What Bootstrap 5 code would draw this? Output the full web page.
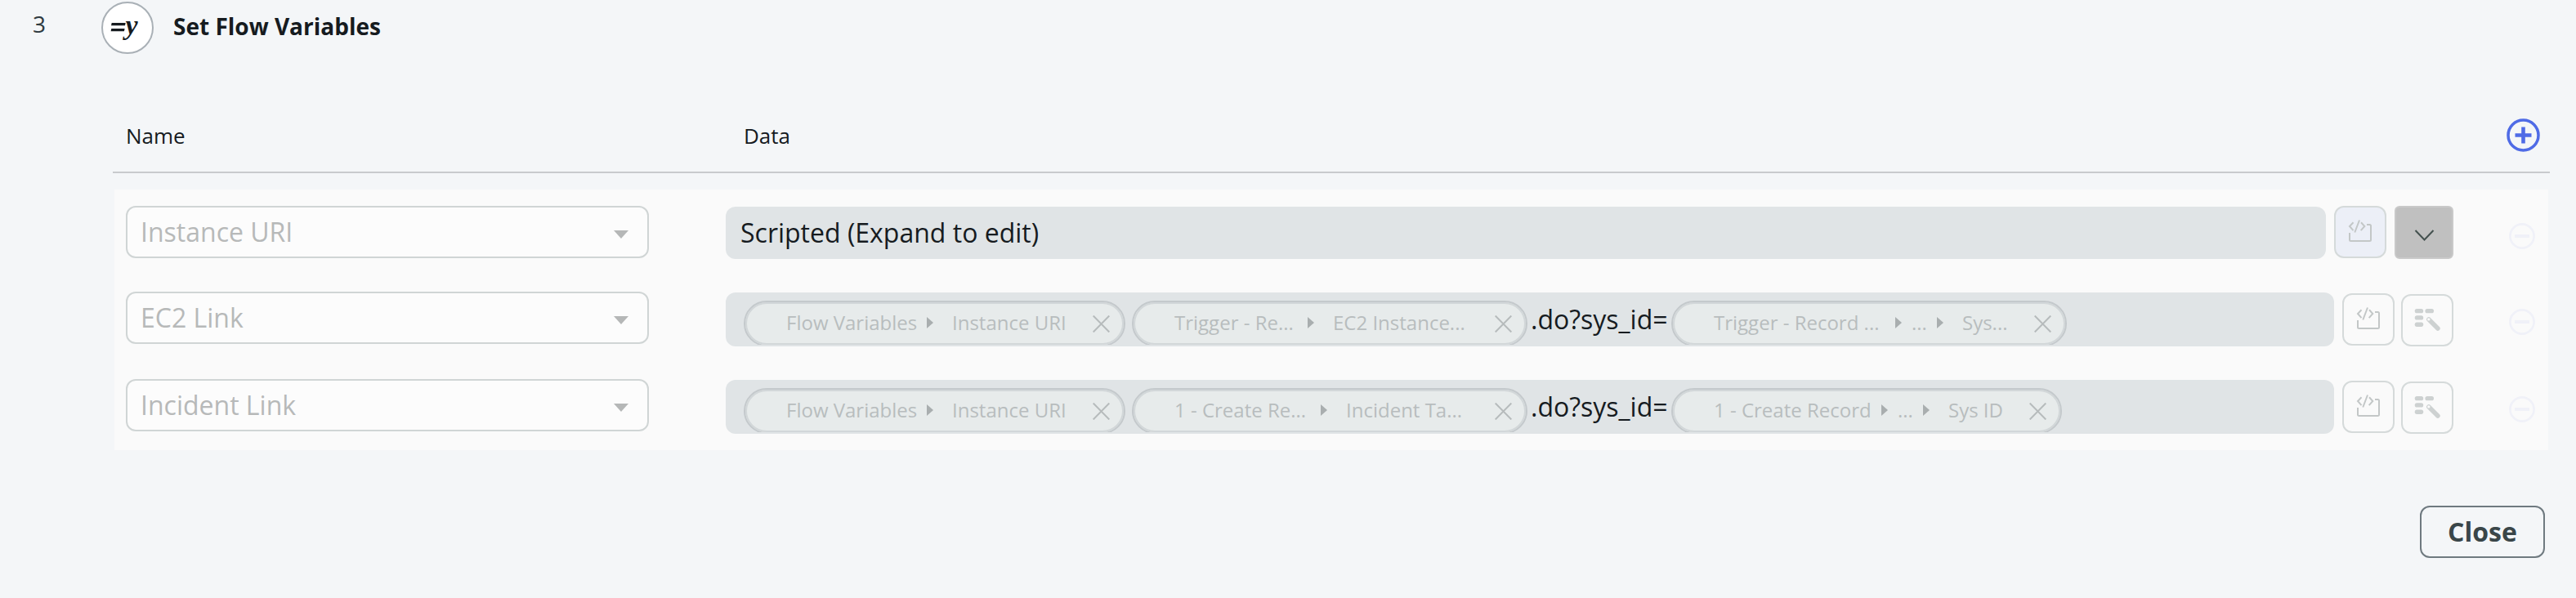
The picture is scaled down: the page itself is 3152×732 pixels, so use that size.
<!DOCTYPE html>
<html lang="en">
<head>
<meta charset="utf-8">
<title>Set Flow Variables</title>
<link href="https://cdn.jsdelivr.net/npm/bootstrap@5.3.0/dist/css/bootstrap.min.css" rel="stylesheet">
<style>
html{overflow:hidden}
body{background:#f4f6f8;font-family:"Open Sans",sans-serif;color:#161b1f;height:732px;overflow:hidden}
svg{display:block;flex:none}
.step-head{height:138px;padding:2px 0 0 40px}
.step-no{width:84px;height:54px;line-height:54px;font-size:28px;color:#2e3a40}
.step-icon{width:64px;height:64px;border:2px solid #a9b0b6;background:#fff}
.step-title{font-size:28px;font-weight:700;line-height:60px;margin-left:24px}
.flow-table{margin:0 32px 0 138px}
.cols-head{height:74px;border-bottom:2px solid #c8cacd;font-size:26px;line-height:56px;padding:0 12px 0 16px}
.cols-head .name-col{width:756px}
.cols-head svg{margin-top:7px}
.rows-panel{margin:20px 2px 0;height:319px;background:#fafafa;padding:20px 16px 0 14px}
.flow-row{height:107px}
.flow-row:first-child{height:105px}
.pick{width:640px;height:64px;border:2px solid #d0d5d5;border-radius:12px;background:#fcfcfc;color:#b7b9b9;font-size:32px;line-height:60px;padding:0 23px 0 16px;margin-right:94px}
.pick svg{margin-top:5px}
.field{height:66px;margin-top:1px;width:1968px;border-radius:12px;background:#e0e4e6;font-size:32px;line-height:66px;padding-left:22px}
.field.scripted{width:1958px;height:64px;line-height:64px;padding-left:18px}
.chips{height:64px;overflow:hidden;padding-top:10px}
.chip{height:56px;border:2px solid #c4c9cc;border-radius:28px;box-shadow:inset 0 0 0 2px #d2d7d9;background:#e7ebeb;color:#b8bdbe;font-size:24px;line-height:49px;padding:0 17px 0 50px;white-space:nowrap}
.chip svg.tri{margin:18px 0 0}
.chip svg.cut{margin:16px 0 0 auto}
.chip .leaf{margin-left:23px}
.chip .mid{margin-left:12px;width:31px}
.chip.c1{width:467px;margin-right:8px}
.chip.c2,.chip.c3{width:484px}
.chip.c3s{width:478px}
.w-flow{width:172px}.w-trig{width:163px}.w-create{width:179px}.w-trec{width:222px}.w-crec{width:205px}
.literal{width:176px;padding-left:4px;line-height:46px;white-space:pre}
.tool{width:64px;height:64px;border:2px solid #d5dada;border-radius:12px;margin:2px 0 0 10px;padding:0;background:transparent}
.tool svg{margin:-2px}
.tool.wand{margin:3px 0 0 8px}
.tool.scr{margin-top:0;background:#eceff7}
.expand{width:72px;height:65px;border:2px solid #c9c9c9;border-radius:6px;background:#c0c0c0;margin-left:10px;padding:0}
.expand svg{margin:27px 0 0 22px}
.remove{margin:21px 0 0 auto}
.close-row{padding:68px 38px 0 0}
.btn-done{width:153px;height:64px;border:2px solid #6f7a80;border-radius:12px;color:#3a4649;font-size:32px;font-weight:700;line-height:58px;padding:0}
</style>
</head>
<body>
<svg width="0" height="0" class="d-none">
<defs>
<symbol id="caret" viewBox="0 0 18 10"><path d="M0 0H18L9 10Z" fill="#b5b7b7"/></symbol>
<symbol id="tri" viewBox="0 0 8 14"><path d="M0 0L8 7L0 14Z" fill="#a9aeaf"/></symbol>
<symbol id="cut" viewBox="0 0 21 21"><path d="M.7 .5L20.3 20.5M20.3 .5L.7 20.5" stroke="#b6bbbc" stroke-width="2" fill="none"/></symbol>
<symbol id="code" viewBox="0 0 64 64"><g fill="none" stroke="#c3c7c7" stroke-width="2"><path d="M19 33V41.5Q19 43 20.5 43H43.500Q45 43 45 41.500V24.500Q45 23 43.500 23H40"/><path d="M23.500 20.300L19 25L23.500 30.200M33 20.300L37.300 25L32.700 30.200M31 17.500L25.300 32.500"/></g></symbol>
<symbol id="wand" viewBox="0 0 64 64"><g fill="#cdd1d1"><rect x="16.700" y="18" width="10.500" height="5.300" rx="2.600"/><rect x="29.400" y="18" width="10.600" height="5.300" rx="2.600"/><rect x="16.700" y="26.300" width="10.500" height="5.300" rx="2.600"/><rect x="16.700" y="34.600" width="10.500" height="5.300" rx="2.600"/></g><path d="M33.900 31L44.900 42" stroke="#cdd1d1" stroke-width="5.600" stroke-linecap="round"/><circle cx="33.800" cy="30.900" r="1.700" fill="#fafafa"/></symbol>
<symbol id="minus" viewBox="0 0 32 32"><circle cx="16" cy="16" r="14.600" fill="none" stroke="#f0f1f8" stroke-width="2.700"/><path d="M7 16H25" stroke="#f0f1f8" stroke-width="4"/></symbol>
</defs>
</svg>

<header class="step-head d-flex align-items-start">
<div class="step-no">3</div>
<div class="step-icon rounded-circle"><svg width="60" height="60" viewBox="126 4 60 60"><path d="M136.700 28H153.700L153 31.300H136ZM136.300 35H152.600L151.900 38.300H135.600Z" fill="#161b1f"/><text x="153.500" y="42" font-family="Liberation Serif, serif" font-weight="700" font-style="italic" font-size="34" fill="#161b1f">y</text></svg></div>
<div class="step-title">Set Flow Variables</div>
</header>

<main class="flow-table">
<div class="cols-head d-flex">
<div class="name-col">Name</div>
<div>Data</div>
<svg class="ms-auto" width="41" height="41" viewBox="0 0 41 41"><circle cx="20.500" cy="20.500" r="18.500" fill="none" stroke="#4f6be6" stroke-width="3.500"/><path d="M10.500 20.500H30.500M20.500 10.500V30.500" stroke="#4f6be6" stroke-width="4.600"/></svg>
</div>

<section class="rows-panel">
<div class="flow-row d-flex align-items-start">
<div class="pick d-flex align-items-center justify-content-between"><span>Instance URI</span><svg width="18" height="10"><use href="#caret"/></svg></div>
<div class="field scripted">Scripted (Expand to edit)</div>
<button class="tool scr"><svg width="64" height="64"><use href="#code"/></svg></button>
<button class="expand d-flex"><svg width="25" height="16" viewBox="0 0 25 16"><path d="M1.500 1L12.500 12.500L23.500 1" fill="none" stroke="#44514f" stroke-width="2"/></svg></button>
<svg class="remove" width="32" height="32"><use href="#minus"/></svg>
</div>

<div class="flow-row d-flex align-items-start">
<div class="pick d-flex align-items-center justify-content-between"><span>EC2 Link</span><svg width="18" height="10"><use href="#caret"/></svg></div>
<div class="field"><div class="chips d-flex">
<div class="chip c1 d-flex"><span class="w-flow">Flow Variables</span><svg class="tri" width="8" height="14"><use href="#tri"/></svg><span class="leaf">Instance URI</span><svg class="cut" width="21" height="21"><use href="#cut"/></svg></div>
<div class="chip c2 d-flex"><span class="w-trig">Trigger - Re...</span><svg class="tri" width="8" height="14"><use href="#tri"/></svg><span class="leaf">EC2 Instance...</span><svg class="cut" width="21" height="21"><use href="#cut"/></svg></div>
<span class="literal">.do?sys_id=</span>
<div class="chip c3 d-flex"><span class="w-trec">Trigger - Record ...</span><svg class="tri" width="8" height="14"><use href="#tri"/></svg><span class="mid">...</span><svg class="tri" width="8" height="14"><use href="#tri"/></svg><span class="leaf">Sys...</span><svg class="cut" width="21" height="21"><use href="#cut"/></svg></div>
</div></div>
<button class="tool"><svg width="64" height="64"><use href="#code"/></svg></button>
<button class="tool wand"><svg width="64" height="64"><use href="#wand"/></svg></button>
<svg class="remove" width="32" height="32"><use href="#minus"/></svg>
</div>

<div class="flow-row d-flex align-items-start">
<div class="pick d-flex align-items-center justify-content-between"><span>Incident Link</span><svg width="18" height="10"><use href="#caret"/></svg></div>
<div class="field"><div class="chips d-flex">
<div class="chip c1 d-flex"><span class="w-flow">Flow Variables</span><svg class="tri" width="8" height="14"><use href="#tri"/></svg><span class="leaf">Instance URI</span><svg class="cut" width="21" height="21"><use href="#cut"/></svg></div>
<div class="chip c2 d-flex"><span class="w-create">1 - Create Re...</span><svg class="tri" width="8" height="14"><use href="#tri"/></svg><span class="leaf">Incident Ta...</span><svg class="cut" width="21" height="21"><use href="#cut"/></svg></div>
<span class="literal">.do?sys_id=</span>
<div class="chip c3s d-flex"><span class="w-crec">1 - Create Record</span><svg class="tri" width="8" height="14"><use href="#tri"/></svg><span class="mid">...</span><svg class="tri" width="8" height="14"><use href="#tri"/></svg><span class="leaf">Sys ID</span><svg class="cut" width="21" height="21"><use href="#cut"/></svg></div>
</div></div>
<button class="tool"><svg width="64" height="64"><use href="#code"/></svg></button>
<button class="tool wand"><svg width="64" height="64"><use href="#wand"/></svg></button>
<svg class="remove" width="32" height="32"><use href="#minus"/></svg>
</div>
</section>
</main>

<footer class="close-row d-flex justify-content-end">
<button class="btn btn-done">Close</button>
</footer>
<script src="https://cdn.jsdelivr.net/npm/bootstrap@5.3.0/dist/js/bootstrap.bundle.min.js"></script>
</body>
</html>
